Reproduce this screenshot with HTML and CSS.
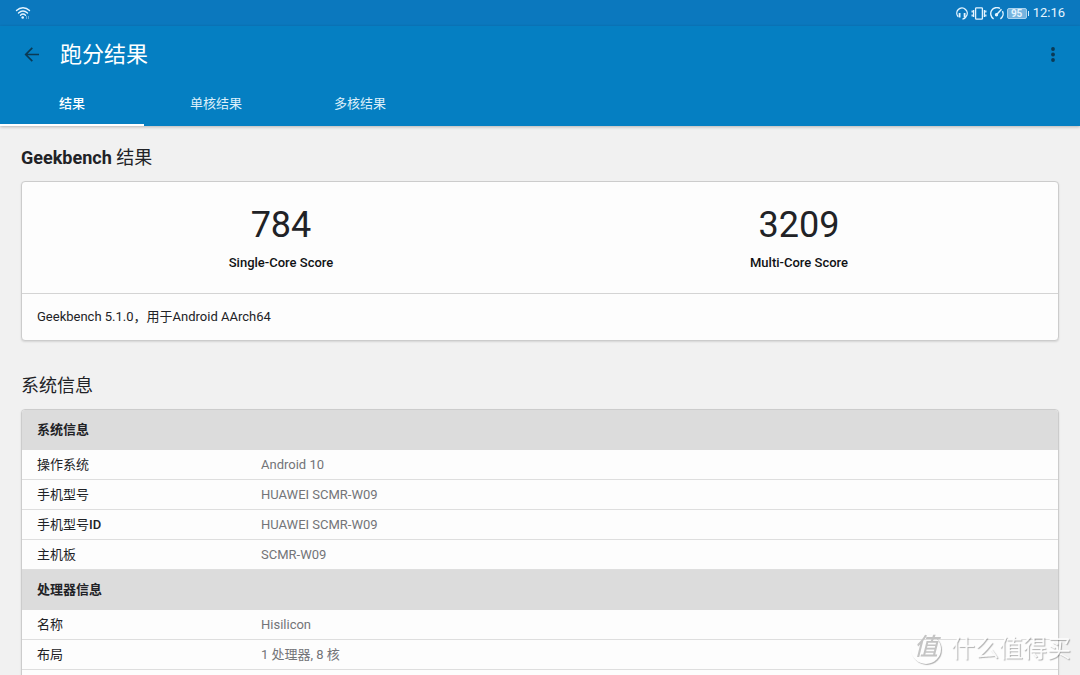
FILE: index.html
```html
<!DOCTYPE html>
<html lang="zh-CN">
<head>
<meta charset="utf-8">
<meta name="viewport" content="width=device-width, initial-scale=1">
<title>跑分结果</title>
<link rel="stylesheet" href="styles.css">
</head>
<body>
<div class="status-bar">
  <svg class="wifi" width="16" height="14" viewBox="0 0 16 14" aria-hidden="true">
    <g fill="none" stroke="currentColor" stroke-width="1.4" stroke-linecap="round">
      <path d="M1.500 4.600C5.300.8 10.700.8 14.500 4.600"/>
      <path d="M3.500 7c2.800-2.600 6.200-2.600 9 0"/>
      <path d="M5.500 9.200c1.500-1.400 3.500-1.400 5 0"/>
    </g>
    <circle cx="7.700" cy="11.500" r="1.300" fill="currentColor"/>
    <path d="M11.500 10v3M13.500 10v3" stroke="currentColor" stroke-width="1" opacity=".4"/>
  </svg>
  <div class="status-right">
    <svg width="12" height="13" viewBox="0 0 12 13" fill="none" stroke="currentColor" aria-hidden="true">
      <path d="M2.200 9.800A5.200 5.200 0 1 1 10 9.600C9.200 11.200 8.200 12 6.500 12" stroke-width="1.400"/>
      <path d="M3.600 6v4.500M8.600 6v4.500" stroke-width="1.800"/>
    </svg>
    <svg width="16" height="13" viewBox="0 0 16 13" fill="none" stroke="currentColor" stroke-width="1.300" aria-hidden="true">
      <rect x="4.600" y=".8" width="6.800" height="11.400" rx=".8"/>
      <path d="M2.600 3v7M13.400 3v7"/>
      <path d="M1.200 3.500v2M1.200 7.500v2M14.800 3.500v2M14.800 7.500v2"/>
    </svg>
    <svg width="14" height="13" viewBox="0 0 14 13" fill="none" stroke="currentColor" stroke-width="1.400" aria-hidden="true">
      <path d="M3.600 11.800A5.900 5.900 0 0 1 10 1.500M12.400 4.100a5.900 5.900 0 0 1-2 7.700"/>
      <path d="M6.500 7.700 11.500 2.200"/>
      <circle cx="6.500" cy="7.800" r="1" fill="currentColor"/>
    </svg>
    <span class="battery">95</span>
    <span class="clock">12:16</span>
  </div>
</div>

<header class="app-bar">
  <div class="toolbar">
    <button class="icon-button" type="button" aria-label="返回">
      <svg width="16" height="16" viewBox="0 0 16 16" fill="none" stroke="currentColor" stroke-width="1.700" aria-hidden="true">
        <path d="M15 7.500H2M8.300.8 1.700 7.500l6.600 6.700"/>
      </svg>
    </button>
    <h1 class="title">跑分结果</h1>
    <button class="icon-button icon-button-menu" type="button" aria-label="更多选项">
      <svg width="4" height="16" viewBox="0 0 4 16" fill="currentColor" aria-hidden="true">
        <circle cx="2" cy="2" r="1.900"/><circle cx="2" cy="7.500" r="1.900"/><circle cx="2" cy="13" r="1.900"/>
      </svg>
    </button>
  </div>
  <nav class="tabs">
    <button class="tab tab-active" type="button">结果</button>
    <button class="tab" type="button">单核结果</button>
    <button class="tab" type="button">多核结果</button>
  </nav>
</header>

<main class="content">
  <h2 class="heading"><strong>Geekbench</strong> 结果</h2>
  <section class="card">
    <div class="scores">
      <div class="score"><div class="score-value">784</div><div class="score-label">Single-Core Score</div></div>
      <div class="score"><div class="score-value">3209</div><div class="score-label">Multi-Core Score</div></div>
    </div>
    <p class="version">Geekbench 5.1.0，用于Android AArch64</p>
  </section>

  <h2 class="heading heading-system">系统信息</h2>
  <section class="card">
    <table class="info">
      <colgroup><col class="col-name"><col></colgroup>
      <thead>
        <tr><th class="group" colspan="2" scope="colgroup">系统信息</th></tr>
      </thead>
      <tbody>
        <tr><th scope="row">操作系统</th><td>Android 10</td></tr>
        <tr><th scope="row">手机型号</th><td>HUAWEI SCMR-W09</td></tr>
        <tr><th scope="row">手机型号<span class="latin">ID</span></th><td>HUAWEI SCMR-W09</td></tr>
        <tr><th scope="row">主机板</th><td>SCMR-W09</td></tr>
      </tbody>
      <tbody>
        <tr><th class="group" colspan="2" scope="colgroup">处理器信息</th></tr>
        <tr><th scope="row">名称</th><td>Hisilicon</td></tr>
        <tr><th scope="row">布局</th><td>1 处理器, 8 核</td></tr>
        <tr><th scope="row"></th><td></td></tr>
      </tbody>
    </table>
  </section>
</main>

<div class="watermark"><span class="watermark-badge">值</span><span>什么值得买</span></div>
</body>
</html>
```
FILE: styles.css
```css
* {
  box-sizing: border-box;
}

body {
  display: flex;
  flex-direction: column;
  height: 100vh;
  margin: 0;
  overflow: hidden;
  background: #f1f1f1;
  color: #212226;
  font-family: Roboto, "Noto Sans CJK SC", sans-serif;
  font-size: 13px;
}

button {
  padding: 0;
  border: 0;
  background: none;
  font: inherit;
}

svg {
  display: block;
}

.status-bar {
  display: flex;
  flex: none;
  align-items: center;
  justify-content: space-between;
  height: 26px;
  padding: 0 15px;
  background: #0b78be;
  color: #e4f4ff;
}

.status-right {
  display: flex;
  align-items: center;
  gap: 3px;
}

.battery {
  position: relative;
  width: 20px;
  height: 11px;
  margin-right: 3px;
  border: 1px solid #a9d2ee;
  border-radius: 2px;
  background: #75b3de;
  font-size: 10px;
  font-weight: 700;
  line-height: 9px;
  text-align: center;
}

.battery::after {
  content: "";
  position: absolute;
  top: 2px;
  right: -3px;
  width: 1px;
  height: 5px;
  background: #d5ebf9;
}

.clock {
  font-size: 13px;
  line-height: 16px;
}

.app-bar {
  flex: none;
  background: #057fc2;
  color: #fff;
  box-shadow: 0 1px 3px rgba(0, 0, 0, 0.25);
}

.toolbar {
  display: flex;
  align-items: center;
  height: 58px;
  padding: 0 15px;
}

.icon-button {
  display: flex;
  align-items: center;
  justify-content: center;
  width: 34px;
  height: 34px;
  color: #0b3a55;
}

.icon-button-menu {
  width: 24px;
}

.title {
  flex: 1;
  margin: 0;
  padding-left: 11px;
  font-size: 22px;
  font-weight: 400;
  line-height: 32px;
}

.tabs {
  display: flex;
}

.tab {
  width: 144px;
  height: 42px;
  padding-bottom: 3px;
  border-bottom: 2px solid transparent;
  color: #dceffa;
  font-size: 13px;
}

.tab-active {
  border-bottom-color: #fff;
  color: #fff;
  font-weight: 500;
}

.content {
  padding: 18px 21px 0;
}

.heading {
  margin: 0;
  padding-bottom: 9px;
  font-size: 18px;
  font-weight: 400;
  line-height: 28px;
}

.heading strong {
  font-weight: 700;
}

.heading-system {
  margin-top: 31px;
}

.card {
  overflow: hidden;
  border: 1px solid #ccc;
  border-radius: 4px;
  background: #fdfdfd;
  box-shadow: 0 1px 2px rgba(0, 0, 0, 0.12);
}

.scores {
  display: flex;
  padding: 20px 0;
}

.score {
  flex: 1;
  text-align: center;
}

.score-value {
  font-size: 36px;
  line-height: 46px;
}

.score-label {
  padding-top: 5px;
  color: #101114;
  font-weight: 500;
  line-height: 20px;
}

.version {
  margin: 0;
  padding: 13px 15px;
  border-top: 1px solid #d4d4d4;
  line-height: 20px;
}

.info {
  width: 100%;
  border-collapse: separate;
  border-spacing: 0;
  table-layout: fixed;
}

.col-name {
  width: 239px;
}

.info th,
.info td {
  height: 30px;
  padding: 0 0 0 15px;
  border-bottom: 1px solid #dedede;
  font-weight: 400;
  line-height: 20px;
  text-align: left;
}

.info td {
  padding-left: 0;
  color: #737478;
}

.info .group {
  height: 40px;
  border-bottom: 0;
  background: #dcdcdc;
  font-weight: 700;
}

.info .latin {
  font-weight: 500;
}

.watermark {
  position: fixed;
  right: 9px;
  bottom: 8px;
  display: flex;
  align-items: center;
  gap: 10px;
  color: rgba(255, 255, 255, 0.9);
  font-size: 24px;
  line-height: 36px;
  text-shadow: 1px 1px 1px rgba(0, 0, 0, 0.3);
}

.watermark-badge {
  width: 30px;
  height: 30px;
  border-radius: 50%;
  box-shadow: 1px 1px 1px rgba(0, 0, 0, 0.3);
  color: #c4c4c4;
  font-style: italic;
  font-weight: 500;
  line-height: 26px;
  text-align: center;
  text-shadow: none;
}
```
